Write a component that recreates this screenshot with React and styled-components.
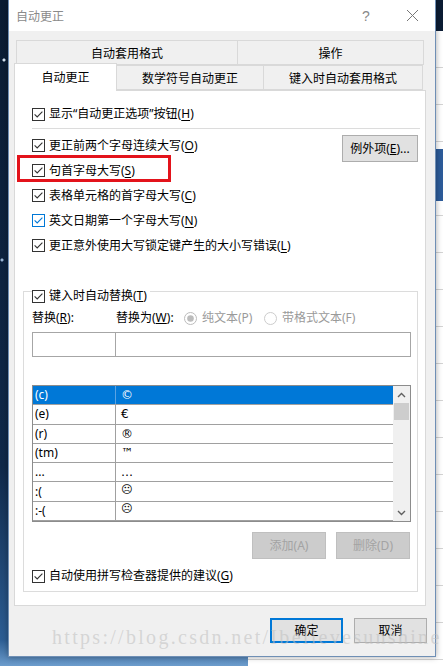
import React from "react";
import styled, { createGlobalStyle } from "styled-components";

const GlobalStyle = createGlobalStyle`
  html, body {
    margin: 0;
    padding: 0;
    background: #0d213b;
  }
  * {
    box-sizing: border-box;
  }
`;

const ui = `"Noto Sans", "Noto Sans CJK SC", sans-serif`;

function CheckBox({ blue }) {
  const c = blue ? "#0078d7" : "#333333";
  return (
    <svg width="13" height="13" viewBox="0 0 13 13">
      <rect x="0.5" y="0.5" width="12" height="12" fill="#fff" stroke={c} />
      <path d="M2.6 6.4 L5.2 9 L10.4 3.6" fill="none" stroke={c} strokeWidth="1.1" />
    </svg>
  );
}

function Radio({ checked }) {
  return (
    <svg width="13" height="13" viewBox="0 0 13 13">
      <circle cx="6.5" cy="6.5" r="6" fill="#fff" stroke={checked ? "#bcbcbc" : "#cccccc"} />
      {checked && <circle cx="6.5" cy="6.5" r="3.3" fill="#bcbcbc" />}
    </svg>
  );
}

function Chevron({ down }) {
  return (
    <svg width="9" height="6" viewBox="0 0 9 6">
      <path
        d={down ? "M1 1 L4.5 4.5 L8 1" : "M1 5 L4.5 1.5 L8 5"}
        fill="none"
        stroke="#606060"
        strokeWidth="1.4"
      />
    </svg>
  );
}

const rows = [
  ["(c)", "©"],
  ["(e)", "€"],
  ["(r)", "®"],
  ["(tm)", "™"],
  ["...", "…"],
  [":(", "☹"],
  [":-(", "☹"],
];

export default function App() {
  return (
    <Desktop>
      <GlobalStyle />
      <DocPage>
        <DocBand />
      </DocPage>
      <Window>
        <TitleBar>
          <Title>自动更正</Title>
          <TitleButtons>
            <Help>?</Help>
            <Close>
              <svg width="13" height="13" viewBox="0 0 13 13">
                <path d="M1 1 L12 12 M12 1 L1 12" stroke="#777" strokeWidth="1" />
              </svg>
            </Close>
          </TitleButtons>
        </TitleBar>

        <Body>
          <TabRow $indent>
            <Tab $w={222}>自动套用格式</Tab>
            <Tab $w={187}>操作</Tab>
          </TabRow>
          <TabRow>
            <Tab $w={103} $active>自动更正</Tab>
            <Tab $w={148}>数学符号自动更正</Tab>
            <Tab $w={160}>键入时自动套用格式</Tab>
          </TabRow>

          <Panel>
            <RedMark />
            <TopSection>
              <CheckRow>
                <CheckBox />
                <span>显示“自动更正选项”按钮(<u>H</u>)</span>
              </CheckRow>
              <Separator />
              <OptionsBlock>
                <OptionList>
                  <CheckRow $h={25}>
                    <CheckBox />
                    <span>更正前两个字母连续大写(<u>O</u>)</span>
                  </CheckRow>
                  <CheckRow $h={25}>
                    <CheckBox />
                    <span>句首字母大写(<u>S</u>)</span>
                  </CheckRow>
                  <CheckRow $h={25}>
                    <CheckBox />
                    <span>表格单元格的首字母大写(<u>C</u>)</span>
                  </CheckRow>
                  <CheckRow $h={25}>
                    <CheckBox blue />
                    <span>英文日期第一个字母大写(<u>N</u>)</span>
                  </CheckRow>
                  <CheckRow $h={25}>
                    <CheckBox />
                    <span>更正意外使用大写锁定键产生的大小写错误(<u>L</u>)</span>
                  </CheckRow>
                </OptionList>
                <Button $w={76} $h={27} $top={2}>
                  例外项(<u>E</u>)...
                </Button>
              </OptionsBlock>
            </TopSection>

            <Group>
              <Legend>
                <CheckBox />
                <span>键入时自动替换(<u>T</u>)</span>
              </Legend>
              <LabelRow>
                <FieldLabel $w={84}>
                  替换(<u>R</u>):
                </FieldLabel>
                <FieldLabel $w={68}>
                  替换为(<u>W</u>):
                </FieldLabel>
                <RadioItem $w={80}>
                  <Radio checked />
                  <span>纯文本(P)</span>
                </RadioItem>
                <RadioItem>
                  <Radio />
                  <span>带格式文本(F)</span>
                </RadioItem>
              </LabelRow>
              <InputRow>
                <Input $w={84} />
                <Input $grow />
              </InputRow>

              <List>
                <ListBody>
                  {rows.map(([a, b], i) => (
                    <ListRow key={i} $selected={i === 0}>
                      <KeyCell $selected={i === 0}>{a}</KeyCell>
                      <ValueCell $sym={b === "☹"}>{b}</ValueCell>
                    </ListRow>
                  ))}
                </ListBody>
                <ScrollBar>
                  <ScrollArrow>
                    <Chevron />
                  </ScrollArrow>
                  <Thumb />
                  <ScrollTrack />
                  <ScrollArrow>
                    <Chevron down />
                  </ScrollArrow>
                </ScrollBar>
              </List>

              <ActionRow>
                <DisabledButton>添加(A)</DisabledButton>
                <DisabledButton>删除(D)</DisabledButton>
              </ActionRow>

              <CheckRow $h={20} $top={7}>
                <CheckBox />
                <span>自动使用拼写检查器提供的建议(<u>G</u>)</span>
              </CheckRow>
            </Group>
          </Panel>

          <Footer>
            <Button $w={73} $h={25} $primary>
              确定
            </Button>
            <Button $w={73} $h={25}>
              取消
            </Button>
          </Footer>
        </Body>
      </Window>
      <Watermark>https://blog.csdn.net/Ibelievesunshine</Watermark>
    </Desktop>
  );
}

const Desktop = styled.div`
  position: relative;
  width: 443px;
  height: 666px;
  overflow: hidden;
  padding-left: 8px;
  background:
    radial-gradient(circle at 4px 60px, #d8e6f5 0 1px, transparent 2px),
    radial-gradient(circle at 2px 260px, #9ab6d6 0 1px, transparent 2px),
    linear-gradient(180deg, #0b1c33 0%, #10294a 70%, #2c5d93 96%, #6c9ccc 100%);
  font-family: ${ui};
`;

const DocPage = styled.div`
  position: absolute;
  left: 248px;
  top: 31px;
  right: 0;
  bottom: 0;
  background:
    repeating-linear-gradient(180deg, transparent 0 36px, #d4d4d4 36px 37px),
    #ffffff;
`;

const DocBand = styled.div`
  position: absolute;
  left: 0;
  right: 0;
  top: 118px;
  height: 52px;
  background: #2d5c9a;
`;

const Window = styled.div`
  position: relative;
  z-index: 1;
  width: 428px;
  height: 657px;
  background: #f0f0f0;
  border: 1px solid #6f8fb5;
  border-top: none;
  display: flex;
  flex-direction: column;
  box-shadow: 0 0 6px rgba(0, 0, 0, 0.35);
`;

const TitleBar = styled.div`
  height: 31px;
  background: #ffffff;
  display: flex;
  align-items: center;
  justify-content: space-between;
  padding-left: 7px;
`;

const Title = styled.div`
  font-size: 12px;
  color: #8a8a8a;
`;

const TitleButtons = styled.div`
  display: flex;
  align-items: center;
  height: 100%;
`;

const Help = styled.div`
  width: 46px;
  text-align: center;
  font-family: "Liberation Sans", sans-serif;
  font-size: 14px;
  color: #888;
`;

const Close = styled.div`
  width: 46px;
  display: flex;
  justify-content: center;
  align-items: center;
`;

const Body = styled.div`
  flex: 1;
  display: flex;
  flex-direction: column;
  padding: 9px 9px 0 5px;
`;

const TabRow = styled.div`
  display: flex;
  align-items: flex-end;
  height: 25px;
  margin-left: ${(p) => (p.$indent ? "2px" : "0")};
`;

const Tab = styled.div`
  width: ${(p) => p.$w}px;
  height: ${(p) => (p.$active ? "28px" : "25px")};
  margin-bottom: ${(p) => (p.$active ? "-1px" : "0")};
  margin-right: -1px;
  position: relative;
  z-index: ${(p) => (p.$active ? 2 : 0)};
  background: ${(p) => (p.$active ? "#ffffff" : "#f0f0f0")};
  border: 1px solid #d9d9d9;
  border-bottom: ${(p) => (p.$active ? "none" : "1px solid #d9d9d9")};
  display: flex;
  align-items: center;
  justify-content: center;
  padding-top: ${(p) => (p.$active ? "1px" : "2px")};
  font-size: 12px;
  color: #000;
  line-height: 1;
`;

const Panel = styled.div`
  position: relative;
  background: #ffffff;
  border: 1px solid #d9d9d9;
  padding: 11px 7px 13px 8px;
  display: flex;
  flex-direction: column;
  font-size: 12px;
  color: #000;
`;

const RedMark = styled.div`
  position: absolute;
  left: 2px;
  top: 64px;
  width: 154px;
  height: 27px;
  border: 3px solid #e3131b;
`;

const TopSection = styled.div`
  padding-left: 9px;
  display: flex;
  flex-direction: column;
`;

const CheckRow = styled.div`
  display: flex;
  align-items: center;
  gap: 4px;
  height: ${(p) => p.$h || 24}px;
  margin-top: ${(p) => p.$top || 0}px;
  white-space: nowrap;
  line-height: 1;

  u {
    text-underline-offset: 2px;
  }
`;

const Separator = styled.div`
  height: 1px;
  background: #dcdcdc;
  margin: 2px -2px 4px 0;
`;

const OptionsBlock = styled.div`
  display: flex;
  justify-content: space-between;
  align-items: flex-start;
`;

const OptionList = styled.div`
  display: flex;
  flex-direction: column;
`;

const Button = styled.div`
  width: ${(p) => p.$w}px;
  height: ${(p) => p.$h}px;
  margin-top: ${(p) => p.$top || 0}px;
  background: #e1e1e1;
  border: ${(p) => (p.$primary ? "2px solid #0078d7" : "1px solid #adadad")};
  display: flex;
  align-items: center;
  justify-content: center;
  font-size: 12px;
  color: #000;
  line-height: 1;
  white-space: nowrap;
`;

const Group = styled.div`
  margin-top: 33px;
  border: 1px solid #dcdcdc;
  padding: 0 6px 5px 8px;
  display: flex;
  flex-direction: column;
`;

const Legend = styled.div`
  display: flex;
  align-items: center;
  gap: 4px;
  height: 18px;
  margin-top: -5px;
  width: fit-content;
  padding-right: 3px;
  background: #ffffff;
  line-height: 1;
  white-space: nowrap;
`;

const LabelRow = styled.div`
  display: flex;
  align-items: center;
  height: 22px;
  margin-top: 2px;
  line-height: 1;
  white-space: nowrap;
`;

const FieldLabel = styled.div`
  width: ${(p) => p.$w}px;
`;

const RadioItem = styled.div`
  display: flex;
  align-items: center;
  gap: 5px;
  width: ${(p) => (p.$w ? `${p.$w}px` : "auto")};
  color: #9a9a9a;
`;

const InputRow = styled.div`
  display: flex;
  margin-top: 3px;
  height: 25px;
`;

const Input = styled.div`
  width: ${(p) => (p.$grow ? "auto" : `${p.$w}px`)};
  flex: ${(p) => (p.$grow ? 1 : "none")};
  border: 1px solid #a6a6a6;
  margin-right: ${(p) => (p.$grow ? "0" : "-1px")};
  background: #fff;
`;

const List = styled.div`
  margin-top: 28px;
  height: 137px;
  border: 1px solid #8c8c8c;
  display: flex;
  background: #fff;
`;

const ListBody = styled.div`
  flex: 1;
  display: flex;
  flex-direction: column;
`;

const ListRow = styled.div`
  display: flex;
  height: 19.3px;
  border-bottom: 1px solid #a0a0a0;
  background: ${(p) => (p.$selected ? "#0078d7" : "#fff")};
  color: ${(p) => (p.$selected ? "#fff" : "#000")};
  line-height: 1;
`;

const KeyCell = styled.div`
  width: 83px;
  border-right: 1px solid ${(p) => (p.$selected ? "#5aa3e3" : "#a0a0a0")};
  padding-left: 2px;
  display: flex;
  align-items: center;
  font-family: "Noto Sans", sans-serif;
`;

const ValueCell = styled.div`
  flex: 1;
  padding-left: 5px;
  display: flex;
  align-items: center;
  font-family: "DejaVu Sans", "Noto Sans", sans-serif;
  font-size: ${(p) => (p.$sym ? "11px" : "12px")};
  padding-bottom: ${(p) => (p.$sym ? "4px" : "0")};
`;

const ScrollBar = styled.div`
  width: 17px;
  background: #f0f0f0;
  display: flex;
  flex-direction: column;
`;

const ScrollArrow = styled.div`
  height: 17px;
  display: flex;
  align-items: center;
  justify-content: center;
`;

const Thumb = styled.div`
  height: 17px;
  margin: 0 1px;
  background: #cdcdcd;
`;

const ScrollTrack = styled.div`
  flex: 1;
`;

const ActionRow = styled.div`
  display: flex;
  justify-content: flex-end;
  gap: 10px;
  margin-top: 10px;
  padding-right: 1px;
`;

const DisabledButton = styled.div`
  width: 74px;
  height: 27px;
  background: #cccccc;
  border: 1px solid #bfbfbf;
  color: #a3a3a3;
  display: flex;
  align-items: center;
  justify-content: center;
  font-size: 12px;
  line-height: 1;
`;

const Footer = styled.div`
  display: flex;
  justify-content: flex-end;
  gap: 11px;
  margin-top: 12px;
  margin-right: -1px;
`;

const Watermark = styled.div`
  position: absolute;
  z-index: 2;
  left: 52px;
  top: 626px;
  font-family: "Liberation Serif", serif;
  font-size: 20px;
  letter-spacing: 2.3px;
  color: rgba(190, 190, 190, 0.55);
  white-space: nowrap;
  pointer-events: none;
`;
